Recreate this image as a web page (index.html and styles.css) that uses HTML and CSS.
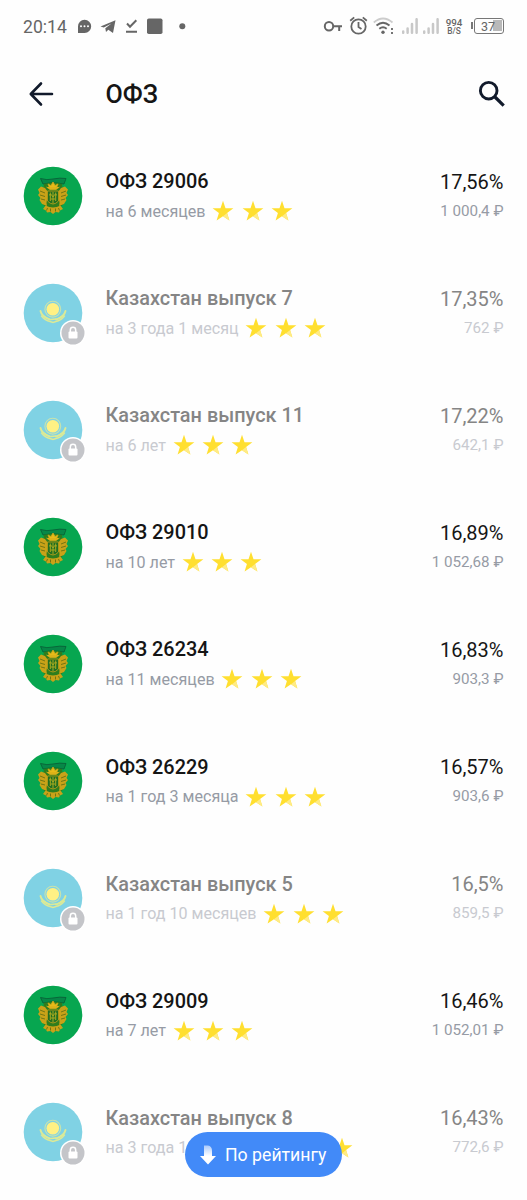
FILE: index.html
```html
<!DOCTYPE html>
<html lang="ru">
<head>
<meta charset="utf-8">
<title>ОФЗ</title>
<link rel="stylesheet" href="styles.css">
</head>
<body>
<svg class="defs" width="0" height="0">
  <defs>
    <linearGradient id="arrowFade" x1="0" y1="0" x2="0" y2="1"><stop offset="0" stop-color="#fff" stop-opacity=".55"/><stop offset=".55" stop-color="#fff"/></linearGradient>
    <symbol id="star" viewBox="0 0 22 22">
      <path d="M11 .8l2.500 7.400 7.900.1-6.300 4.800 2.300 7.500L11 16.200l-6.400 4.400 2.300-7.500L.6 8.300l7.900-.1z" fill="#ffdf30"/>
      <path d="M11 16.200l4.100-3.100 2.300 7.500z" fill="#ffeb85"/>
    </symbol>
    <symbol id="rf" viewBox="0 0 60 60">
      <circle cx="30" cy="30" r="29.3" fill="#07a650"/>
      <path d="M17.500 12.500Q24 14.500 30 13Q37 11.500 43 12.500L41 18Q30 15 20 18Z" fill="#078847" stroke="#086238" stroke-width=".9"/>
      <path d="M21 18Q30 15 39 18L42 36L36 43H24L18 36Z" fill="#2f7d1d"/>
      <g fill="#c9a218">
        <path d="M18 20.500L22 22L25 26L23.500 37L24 40L19 38L16.500 34L17.500 32L15 29L16.500 27L15 23.500Z"/>
        <path d="M42 20.500L38 22L35 26L36.500 37L36 40L41 38L43.500 34L42.500 32L45 29L43.500 27L45 23.500Z"/>
        <path d="M22.500 39.500Q30 43.500 37.500 39.500L40 43L37 44.500L36 46.500L32.500 46L30 48L27.500 46L24 46.500L23 44.500L20 43Z"/>
      </g>
      <path d="M17 25L22 27M17 29L22 30.500M18 33L22 34M43 25L38 27M43 29L38 30.500M42 33L38 34M24.500 42L23.500 44.500M27.500 42.500V45.500M32.500 42.500V45.500M35.500 42L36.500 44.500" stroke="#5c6a12" stroke-width=".8" fill="none"/>
      <path d="M23.500 21L27 23.500H33L36.500 21M25 18L26.500 22H33.500L35 18L32 19.500L30 16L28 19.500Z" fill="#e8ba18" stroke="#cda819" stroke-width=".8"/>
      <path d="M24.500 25H35.500V35Q30 41 24.500 35Z" fill="#216f20" stroke="#b39b1a" stroke-width=".9"/>
      <path d="M27.300 26.500V35M30 26V37.500M32.700 26.500V35M26 29Q28.500 27 30 31Q31.500 27 34 29M28 33H32" fill="none" stroke="#a9aa20" stroke-width="1"/>
    </symbol>
    <symbol id="kz" viewBox="0 0 60 60">
      <circle cx="30" cy="30" r="29.300" fill="#80d2e4"/>
      <circle cx="29.800" cy="26.200" r="7.900" fill="none" stroke="#c5e3b0" stroke-width="1.100"/>
      <circle cx="29.800" cy="26.200" r="6.300" fill="#fff184"/>
      <g fill="none" stroke="#dcea96" stroke-linecap="round">
        <path d="M17.500 28Q19 34.500 27 36.500M42.500 28Q41 34.500 33 36.500" stroke-width="1.900"/>
        <path d="M18.500 33Q22 37.500 27 38.500L30 39.500L33 38.500Q38 37.500 41.500 33" stroke-width="1.400"/>
        <path d="M20.500 32.500L24 35M39.500 32.500L36 35M28 36.500L33 36" stroke-width="1.300"/>
      </g>
    </symbol>
    <symbol id="lock" viewBox="0 0 26 26">
      <circle cx="13" cy="13" r="13" fill="#fff"/>
      <circle cx="13" cy="13" r="11.500" fill="#c4c5c9"/>
      <path d="M10.300 12V10a2.700 2.700 0 0 1 5.400 0V12" fill="none" stroke="#fff" stroke-width="1.500"/>
      <rect x="8.500" y="11.500" width="9" height="7" rx="1" fill="#fff"/>
    </symbol>
    <symbol id="signal" viewBox="0 0 16 16">
      <path d="M1.200 13.500v1.300M5.600 10.500v4.300M10 6v8.800M14.600 1.200v13.600" stroke="#c8c8c8" stroke-width="2.500" stroke-linecap="round"/>
    </symbol>
  </defs>
</svg>
<div class="screen">
  <div class="status">
    <span class="clock">20:14</span>
    <svg class="left-icons" width="112" height="20" viewBox="76 16 112 20" fill="#666">
      <path d="M78 33V26.500a6.600 6.600 0 1 1 6.600 6.500z"/>
      <g fill="#fff"><circle cx="81" cy="26.300" r="1"/><circle cx="84.500" cy="26.300" r="1"/><circle cx="88" cy="26.300" r="1"/></g>
      <path d="M100.500 26.500L115.500 20.300L113 33L108.300 29.700L106 32L105.300 28.300L111.500 23.600L103.800 27.600Z"/>
      <path d="M127 23.500l3 3.200 6.300-6.400M126 31.800h11" fill="none" stroke="#666" stroke-width="2"/>
      <rect x="147" y="18.500" width="15.500" height="15.500" rx="1.800"/>
      <circle cx="182.300" cy="26.300" r="3"/>
    </svg>
    <div class="status-right">
      <svg width="20" height="20" viewBox="0 0 20 20" fill="none" stroke="#666" stroke-width="2"><circle cx="6" cy="10.300" r="4.200"/><path d="M10 10.300h9M16.200 10v5"/></svg>
      <svg class="alarm" width="19" height="20" viewBox="0 0 19 20" fill="none" stroke="#666" stroke-width="1.800"><circle cx="9.500" cy="10.500" r="7.200"/><path d="M9.500 6v5l3 2M1.200 4.700l4-3.300M17.800 4.700l-4-3.300"/></svg>
      <svg class="wifi" width="21" height="20" viewBox="0 0 21 20" fill="none" stroke="#666" stroke-width="1.800"><path d="M.8 6.500Q10 -1.500 19.500 6.500" stroke="#ccc"/><path d="M3.500 9.500Q10 4 16.500 9.500M6.300 12.800Q10 9.800 13.700 12.800"/><circle cx="10" cy="16.200" r="1.700" fill="#666" stroke="none"/><path d="M19 12v2M19 16v2"/></svg>
      <svg class="sig1" width="16" height="16"><use href="#signal"/></svg>
      <svg class="sig2" width="16" height="16"><use href="#signal"/></svg>
      <div class="speed"><b>994</b><span>B/S</span></div>
      <div class="battery"><span class="charge"></span><span class="percent">37</span></div>
    </div>
  </div>
  <header class="header">
    <svg class="back" width="26" height="26" viewBox="0 0 26 26" fill="none" stroke="#111a2b" stroke-width="2.600" stroke-linecap="round" stroke-linejoin="round"><path d="M24 13H3M13 2.500L2.800 13 13 23.500"/></svg>
    <h1>ОФЗ</h1>
    <svg class="search" width="28" height="28" viewBox="0 0 28 28" fill="none" stroke="#111a2b"><circle cx="10.700" cy="10.700" r="8.300" stroke-width="2.900"/><path d="M17 17l8.700 8.700" stroke-width="3.200"/></svg>
  </header>
  <main class="list">
    <div class="row">
      <div class="logo"><svg class="coin"><use href="#rf"/></svg></div>
      <div class="info"><div class="name">ОФЗ 29006</div><div class="term"><span>на 6 месяцев</span><svg><use href="#star"/></svg><svg><use href="#star"/></svg><svg><use href="#star"/></svg></div></div>
      <div class="values"><div class="yield">17,56%</div><div class="price">1 000,4 ₽</div></div>
    </div>
    <div class="row locked">
      <div class="logo"><svg class="coin"><use href="#kz"/></svg><svg class="badge"><use href="#lock"/></svg></div>
      <div class="info"><div class="name">Казахстан выпуск 7</div><div class="term"><span>на 3 года 1 месяц</span><svg><use href="#star"/></svg><svg><use href="#star"/></svg><svg><use href="#star"/></svg></div></div>
      <div class="values"><div class="yield">17,35%</div><div class="price">762 ₽</div></div>
    </div>
    <div class="row locked">
      <div class="logo"><svg class="coin"><use href="#kz"/></svg><svg class="badge"><use href="#lock"/></svg></div>
      <div class="info"><div class="name">Казахстан выпуск 11</div><div class="term"><span>на 6 лет</span><svg><use href="#star"/></svg><svg><use href="#star"/></svg><svg><use href="#star"/></svg></div></div>
      <div class="values"><div class="yield">17,22%</div><div class="price">642,1 ₽</div></div>
    </div>
    <div class="row">
      <div class="logo"><svg class="coin"><use href="#rf"/></svg></div>
      <div class="info"><div class="name">ОФЗ 29010</div><div class="term"><span>на 10 лет</span><svg><use href="#star"/></svg><svg><use href="#star"/></svg><svg><use href="#star"/></svg></div></div>
      <div class="values"><div class="yield">16,89%</div><div class="price">1 052,68 ₽</div></div>
    </div>
    <div class="row">
      <div class="logo"><svg class="coin"><use href="#rf"/></svg></div>
      <div class="info"><div class="name">ОФЗ 26234</div><div class="term"><span>на 11 месяцев</span><svg><use href="#star"/></svg><svg><use href="#star"/></svg><svg><use href="#star"/></svg></div></div>
      <div class="values"><div class="yield">16,83%</div><div class="price">903,3 ₽</div></div>
    </div>
    <div class="row">
      <div class="logo"><svg class="coin"><use href="#rf"/></svg></div>
      <div class="info"><div class="name">ОФЗ 26229</div><div class="term"><span>на 1 год 3 месяца</span><svg><use href="#star"/></svg><svg><use href="#star"/></svg><svg><use href="#star"/></svg></div></div>
      <div class="values"><div class="yield">16,57%</div><div class="price">903,6 ₽</div></div>
    </div>
    <div class="row locked">
      <div class="logo"><svg class="coin"><use href="#kz"/></svg><svg class="badge"><use href="#lock"/></svg></div>
      <div class="info"><div class="name">Казахстан выпуск 5</div><div class="term"><span>на 1 год 10 месяцев</span><svg><use href="#star"/></svg><svg><use href="#star"/></svg><svg><use href="#star"/></svg></div></div>
      <div class="values"><div class="yield">16,5%</div><div class="price">859,5 ₽</div></div>
    </div>
    <div class="row">
      <div class="logo"><svg class="coin"><use href="#rf"/></svg></div>
      <div class="info"><div class="name">ОФЗ 29009</div><div class="term"><span>на 7 лет</span><svg><use href="#star"/></svg><svg><use href="#star"/></svg><svg><use href="#star"/></svg></div></div>
      <div class="values"><div class="yield">16,46%</div><div class="price">1 052,01 ₽</div></div>
    </div>
    <div class="row locked">
      <div class="logo"><svg class="coin"><use href="#kz"/></svg><svg class="badge"><use href="#lock"/></svg></div>
      <div class="info"><div class="name">Казахстан выпуск 8</div><div class="term"><span>на 3 года 10 месяцев</span><svg><use href="#star"/></svg><svg><use href="#star"/></svg><svg><use href="#star"/></svg></div></div>
      <div class="values"><div class="yield">16,43%</div><div class="price">772,6 ₽</div></div>
    </div>
  </main>
  <div class="sort">
    <svg width="18" height="20" viewBox="0 0 18 20"><path d="M5 .5H9Q13 1 13 6V11H17L9 19.500L1 11H5Z" fill="url(#arrowFade)"/></svg>
    <span>По рейтингу</span>
  </div>
</div>
</body>
</html>
```
FILE: styles.css
```css
* { box-sizing: border-box; }
body { margin: 0; background: #fefefe; font-family: Roboto, "Liberation Sans", sans-serif; }
svg { display: block; flex: none; }
.defs { position: absolute; }
.screen { position: relative; width: 527px; height: 1200px; overflow: hidden; }
.status { display: flex; align-items: center; height: 52px; padding: 0 23px; color: #666; }
.clock { width: 53px; padding-top: 2px; font-size: 17.6px; }
.status-right { display: flex; align-items: center; margin-left: auto; }
.alarm { margin-left: 6px; }
.wifi { margin-left: 5px; }
.sig1 { margin-left: 8px; }
.sig2 { margin-left: 5px; }
.speed { width: 18px; margin-left: 6px; padding-top: 2px; line-height: 9px; text-align: center; }
.speed b, .speed span { display: block; }
.speed b { font-weight: 500; font-size: 9.8px; }
.speed span { font-size: 8.4px; font-weight: 500; }
.battery { position: relative; width: 30px; height: 16px; margin-left: 11px; border: 1.5px solid #777; border-radius: 3px; }
.battery::before { content: ""; position: absolute; left: -4px; top: 3px; width: 2px; height: 7px; background: #777; }
.charge { position: absolute; right: 1px; top: 1px; width: 9px; height: 11px; background: #b9b9b9; }
.percent { position: absolute; left: 6px; top: 1px; font-size: 12.5px; line-height: 13px; }
.header { display: flex; align-items: center; height: 85px; padding: 0 21px 0 28px; }
.back { margin-bottom: 2px; }
.header h1 { margin: 1px 0 0 51.5px; color: #151515; font-size: 25px; font-weight: 500; line-height: 28px; }
.search { margin-left: auto; margin-bottom: 2px; }
.list { display: grid; grid-auto-rows: 117.1px; }
.row { display: flex; align-items: center; height: 117.1px; padding: 0 23.5px 0 23px; color: #151515; }
.logo { position: relative; width: 60px; height: 60px; }
.coin { width: 60px; height: 60px; }
.badge { position: absolute; left: 37px; top: 37.5px; width: 26px; height: 26px; }
.info { flex: 1; margin-left: 22.5px; padding-top: 2px; }
.name { font-size: 19.9px; font-weight: 500; line-height: 26px; white-space: nowrap; }
.term { display: flex; align-items: center; margin-top: 3px; height: 26px; color: #969ba5; font-size: 16.1px; white-space: nowrap; }
.term svg { width: 22px; height: 22px; margin-left: 7.3px; }
.term span + svg { margin-left: 6.7px; }
.values { padding-top: 1px; text-align: right; white-space: nowrap; }
.yield { font-size: 20px; line-height: 26px; }
.price { height: 26px; margin-top: 3px; color: #969ba5; font-size: 15.2px; line-height: 26px; }
.locked .name, .locked .yield { color: #858585; }
.locked .term, .locked .price { color: #c8cad0; }
.sort { position: absolute; left: 185px; top: 1132px; display: flex; align-items: center; width: 157px; height: 45px; padding-left: 14px; gap: 8px; border-radius: 23px; background: #428af8; color: #fff; font-size: 17.7px; }
```
